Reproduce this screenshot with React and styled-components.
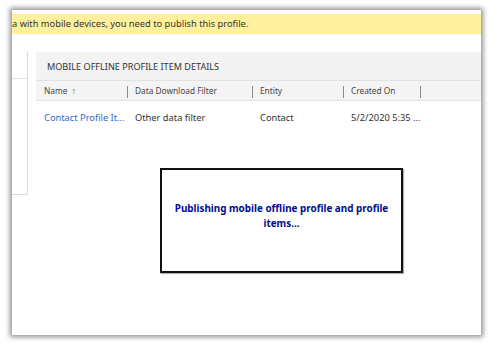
import React from 'react'
import styled, { createGlobalStyle } from 'styled-components'

const Global = createGlobalStyle`
  html, body { margin: 0; padding: 0; background: #fff; }
  body { font-family: "Noto Sans", "Open Sans", sans-serif; }
`

const Page = styled.div`
  width: 493px;
  height: 345px;
  padding: 10px 12px 10px 12px;
  box-sizing: border-box;
`

const Frame = styled.div`
  position: relative;
  width: 469px;
  height: 325px;
  background: #fff;
  box-shadow: 0 0 5px 2px rgba(0, 0, 0, 0.45);
  display: flex;
  flex-direction: column;
  overflow: hidden;
`

const Banner = styled.div`
  margin-top: 4px;
  height: 20px;
  background: #fff09e;
  color: #333;
  font-size: 9.3px;
  line-height: 20px;
  white-space: nowrap;
`

const Body = styled.div`
  margin-top: 18px;
  display: flex;
  gap: 8px;
`

const SidePanel = styled.div`
  width: 15px;
  height: 142px;
  border-right: 1px solid #d4dcdc;
  border-bottom: 1px solid #d4dcdc;
  display: flex;
  flex-direction: column;
`

const SideHead = styled.div`
  height: 26px;
  border-bottom: 1px solid #e3e3e3;
`

const Main = styled.div`
  flex: 1;
  display: flex;
  flex-direction: column;
`

const Title = styled.div`
  height: 28px;
  background: #f3f3f3;
  padding-left: 11px;
  display: flex;
  align-items: center;
  font-size: 9.1px;
  color: #333;
`

const Grid = styled.div`
  display: grid;
  grid-template-columns: 92px 125px 91px 77px 1fr;
`

const HeadRow = styled(Grid)`
  height: 19px;
  background: #f4f4f4;
  border-top: 1px solid #e2e2e2;
  border-bottom: 1px solid #e2e2e2;
`

const HeadCell = styled.div`
  position: relative;
  display: flex;
  align-items: center;
  padding-left: ${p => p.$pad || 7}px;
  font-size: 8.3px;
  color: #444;
  &::after {
    content: '';
    display: ${p => (p.$sep ? 'block' : 'none')};
    position: absolute;
    right: 0;
    top: 5px;
    height: 12px;
    width: 1px;
    background: #8a8a8a;
  }
`

const Arrow = styled.span`
  margin-left: 4px;
  font-size: 9px;
  color: #666;
`

const DataRow = styled(Grid)`
  height: 32px;
`

const Cell = styled.div`
  display: flex;
  align-items: center;
  padding-left: ${p => p.$pad || 7}px;
  font-size: 9.3px;
  color: ${p => (p.$link ? '#2a6bc8' : '#333')};
  white-space: nowrap;
`

const Dialog = styled.div`
  position: absolute;
  left: 148px;
  top: 158px;
  width: 243px;
  height: 105px;
  border: 2px solid #111;
  background: #fff;
  box-shadow: 1px 1px 1px rgba(0, 0, 0, 0.3);
  display: flex;
  align-items: center;
  justify-content: center;
  text-align: center;
  padding: 0 12px 10px;
  box-sizing: border-box;
`

const DialogText = styled.div`
  font-size: 9.9px;
  font-weight: 700;
  line-height: 15px;
  color: #000d8f;
`

export default function App() {
  return (
    <>
      <Global />
      <Page>
        <Frame>
          <Banner>a with mobile devices, you need to publish this profile.</Banner>
          <Body>
            <SidePanel>
              <SideHead />
            </SidePanel>
            <Main>
              <Title>MOBILE OFFLINE PROFILE ITEM DETAILS</Title>
              <HeadRow>
                <HeadCell $pad={8} $sep>Name<Arrow>↑</Arrow></HeadCell>
                <HeadCell $sep>Data Download Filter</HeadCell>
                <HeadCell $sep>Entity</HeadCell>
                <HeadCell $sep>Created On</HeadCell>
                <HeadCell />
              </HeadRow>
              <DataRow>
                <Cell $pad={8} $link>Contact Profile It...</Cell>
                <Cell>Other data filter</Cell>
                <Cell>Contact</Cell>
                <Cell>5/2/2020 5:35 ...</Cell>
                <Cell />
              </DataRow>
            </Main>
          </Body>
          <Dialog>
            <DialogText>Publishing mobile offline profile and profile items...</DialogText>
          </Dialog>
        </Frame>
      </Page>
    </>
  )
}
